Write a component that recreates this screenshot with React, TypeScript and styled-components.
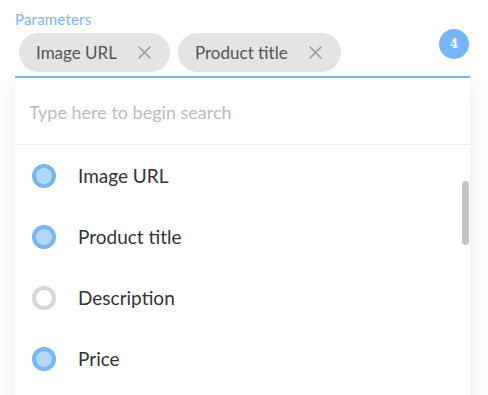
import React from 'react'
import styled, { createGlobalStyle } from 'styled-components'

const GlobalStyle = createGlobalStyle`
  html, body {
    margin: 0;
    padding: 0;
    background: #fff;
    overflow: hidden;
  }
  body {
    font-family: Lato, 'Open Sans', sans-serif;
  }
`

const BLUE = '#74b6f6'

const options = [
  { label: 'Image URL', checked: true },
  { label: 'Product title', checked: true },
  { label: 'Description', checked: false },
  { label: 'Price', checked: true },
]

const selected = ['Image URL', 'Product title']

const CloseIcon = () => (
  <svg width="13" height="13" viewBox="0 0 13 13">
    <path d="M1 1 L12 12 M12 1 L1 12" stroke="#9a9a9a" strokeWidth="1.6" strokeLinecap="round" />
  </svg>
)

const App = () => {
  return (
    <Page>
      <GlobalStyle />
      <Label>Parameters</Label>
      <Field>
        <ChipRow>
          {selected.map((s) => (
            <Chip key={s}>
              <span>{s}</span>
              <CloseIcon />
            </Chip>
          ))}
        </ChipRow>
        <Badge>4</Badge>
      </Field>
      <Panel>
        <Search placeholder="Type here to begin search" />
        <List>
          {options.map((o) => (
            <Option key={o.label}>
              <Radio $checked={o.checked} />
              <OptionText>{o.label}</OptionText>
            </Option>
          ))}
        </List>
        <Thumb />
      </Panel>
    </Page>
  )
}

const Page = styled.div`
  padding: 10px 18px 0 15px;
  height: 395px;
  box-sizing: border-box;
`

const Label = styled.div`
  font-size: 15px;
  line-height: 18px;
  color: #7ab8f7;
  height: 23px;
  letter-spacing: 0.2px;
`

const Field = styled.div`
  display: flex;
  align-items: flex-start;
  justify-content: space-between;
  padding: 0 1px 4px 4px;
  border-bottom: 2px solid #7db9f1;
`

const ChipRow = styled.div`
  display: flex;
  gap: 8px;
`

const Chip = styled.div`
  display: flex;
  align-items: center;
  gap: 21px;
  height: 39px;
  padding: 0 19px 0 17px;
  border-radius: 20px;
  background: #e4e4e4;
  color: #555;
  font-size: 17px;
  svg {
    display: block;
  }
`

const Badge = styled.div`
  width: 30px;
  height: 30px;
  margin-top: -4px;
  border-radius: 50%;
  background: ${BLUE};
  color: #fff;
  font-family: 'DejaVu Serif', serif;
  font-weight: 600;
  font-size: 12px;
  display: flex;
  align-items: center;
  justify-content: center;
`

const Panel = styled.div`
  position: relative;
  background: #fff;
  box-shadow: 0 6px 18px rgba(0, 0, 0, 0.09);
  height: 330px;
`

const Search = styled.input`
  display: block;
  width: 100%;
  box-sizing: border-box;
  height: 67px;
  border: none;
  border-bottom: 1px solid #eee;
  padding: 2px 14px 0;
  font-family: Lato, 'Open Sans', sans-serif;
  font-size: 18px;
  outline: none;
  &::placeholder {
    color: #bbb;
  }
`

const List = styled.div`
  display: flex;
  flex-direction: column;
`

const Option = styled.div`
  display: flex;
  align-items: center;
  gap: 22px;
  height: 61px;
  padding-left: 17px;
`

const Radio = styled.div<{ $checked: boolean }>`
  width: 24px;
  height: 24px;
  box-sizing: border-box;
  border-radius: 50%;
  border: 4px solid ${(p) => (p.$checked ? BLUE : '#d6d6d6')};
  background: ${(p) => (p.$checked ? '#b3d7fb' : '#fff')};
`

const OptionText = styled.span`
  font-size: 19px;
  color: #333;
`

const Thumb = styled.div`
  position: absolute;
  right: 1px;
  top: 103px;
  width: 7px;
  height: 64px;
  border-radius: 4px;
  background: #c6c6c6;
`

export default App
